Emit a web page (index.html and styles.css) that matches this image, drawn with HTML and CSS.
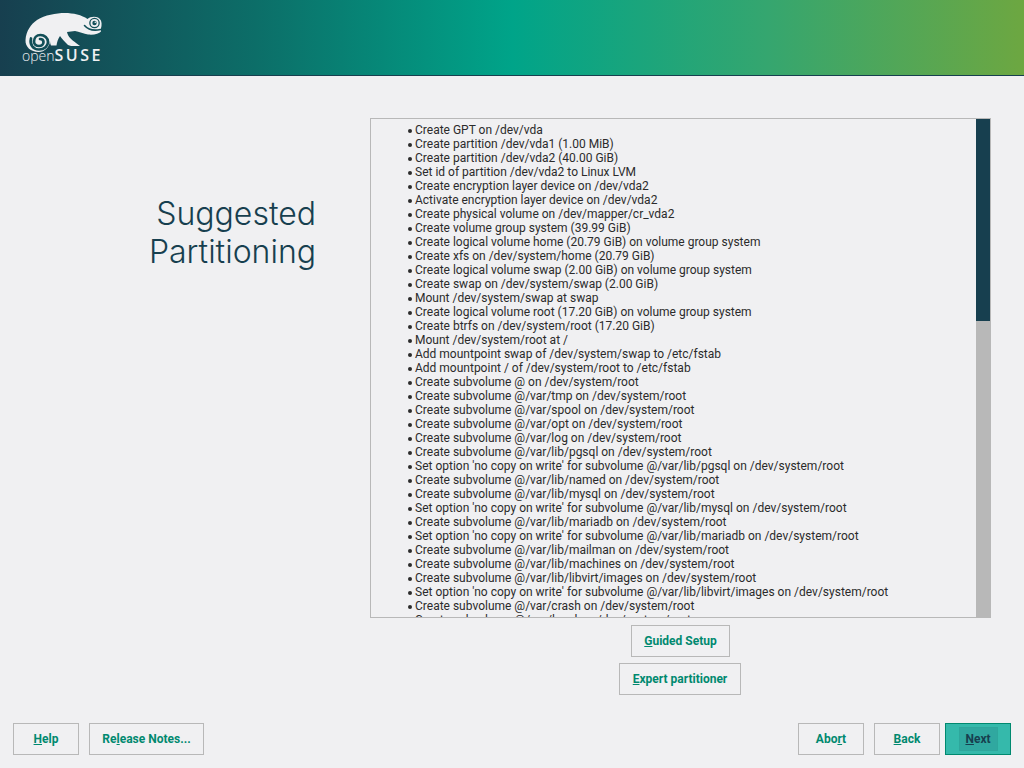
FILE: index.html
```html
<!DOCTYPE html>
<html lang="en">
<head>
    <meta charset="UTF-8">
    <title>Suggested Partitioning</title>
    <link rel="stylesheet" href="styles.css">
</head>
<body>
    <header class="banner">
        <div class="logo">
            <svg class="logo-mark" width="84" height="44" viewBox="22 10 84 44">
                <path fill="#f0f0f2" d="M25.500 40C26 31 31 24 37 20 45 15 56 13 65 13 73 13 82 15 87.500 19 90 16.500 95 16 98 17.500 101 19 102 22 101.500 26 101 28 100.500 29.500 101 31.500 99 34 94 35 88 34.500 84 34 79 31.500 75 31L67 32C68 37 72 40 76 43L80 46C76 46 71 46.500 68 45 65 42 62 39 60 36 58 39 57 42 56.500 45.500L51 45.500C50.500 44 50 43 50 41 49.500 47 45 52 38.500 52 31 52 25 47 25.500 40Z"/>
                <path fill="none" stroke="#124f58" stroke-width="2.700" stroke-linecap="round" d="M31 38.500C29.500 44.500 33 49.500 39 49.500 44.500 49.500 48 46 48 42 48 38 44.500 35 40.500 35 36.500 35 34 38 34 41.500 34 44.500 36.500 46 39 46 41.500 46 43.500 44.500 43.500 42 43.500 40 42 39 40 39"/>
                <path fill="none" stroke="#124f58" stroke-width="1.600" stroke-linecap="round" d="M84.500 25.500C88 29.500 94 31 100.500 29.500"/>
                <circle cx="94.500" cy="23" r="5.300" fill="#124f58"/>
                <circle cx="94.500" cy="23" r="4" fill="#f0f0f2"/>
                <circle cx="94.500" cy="23" r="2.200" fill="#124f58"/>
                <circle cx="95.300" cy="22.300" r="0.800" fill="#f0f0f2"/>
            </svg>
            <div class="logo-text"><span class="logo-open">open</span><span class="logo-suse">SUSE</span></div>
        </div>
    </header>

    <main class="content">
        <div class="title-col">
            <h1>Suggested<br>Partitioning</h1>
        </div>
        <div class="main-col">
            <div class="listbox">
                <ul class="actions">
                    <li>Create GPT on /dev/vda</li>
                    <li>Create partition /dev/vda1 (1.00 MiB)</li>
                    <li>Create partition /dev/vda2 (40.00 GiB)</li>
                    <li>Set id of partition /dev/vda2 to Linux LVM</li>
                    <li>Create encryption layer device on /dev/vda2</li>
                    <li>Activate encryption layer device on /dev/vda2</li>
                    <li>Create physical volume on /dev/mapper/cr_vda2</li>
                    <li>Create volume group system (39.99 GiB)</li>
                    <li>Create logical volume home (20.79 GiB) on volume group system</li>
                    <li>Create xfs on /dev/system/home (20.79 GiB)</li>
                    <li>Create logical volume swap (2.00 GiB) on volume group system</li>
                    <li>Create swap on /dev/system/swap (2.00 GiB)</li>
                    <li>Mount /dev/system/swap at swap</li>
                    <li>Create logical volume root (17.20 GiB) on volume group system</li>
                    <li>Create btrfs on /dev/system/root (17.20 GiB)</li>
                    <li>Mount /dev/system/root at /</li>
                    <li>Add mountpoint swap of /dev/system/swap to /etc/fstab</li>
                    <li>Add mountpoint / of /dev/system/root to /etc/fstab</li>
                    <li>Create subvolume @ on /dev/system/root</li>
                    <li>Create subvolume @/var/tmp on /dev/system/root</li>
                    <li>Create subvolume @/var/spool on /dev/system/root</li>
                    <li>Create subvolume @/var/opt on /dev/system/root</li>
                    <li>Create subvolume @/var/log on /dev/system/root</li>
                    <li>Create subvolume @/var/lib/pgsql on /dev/system/root</li>
                    <li>Set option 'no copy on write' for subvolume @/var/lib/pgsql on /dev/system/root</li>
                    <li>Create subvolume @/var/lib/named on /dev/system/root</li>
                    <li>Create subvolume @/var/lib/mysql on /dev/system/root</li>
                    <li>Set option 'no copy on write' for subvolume @/var/lib/mysql on /dev/system/root</li>
                    <li>Create subvolume @/var/lib/mariadb on /dev/system/root</li>
                    <li>Set option 'no copy on write' for subvolume @/var/lib/mariadb on /dev/system/root</li>
                    <li>Create subvolume @/var/lib/mailman on /dev/system/root</li>
                    <li>Create subvolume @/var/lib/machines on /dev/system/root</li>
                    <li>Create subvolume @/var/lib/libvirt/images on /dev/system/root</li>
                    <li>Set option 'no copy on write' for subvolume @/var/lib/libvirt/images on /dev/system/root</li>
                    <li>Create subvolume @/var/crash on /dev/system/root</li>
                    <li>Create subvolume @/usr/local on /dev/system/root</li>
                </ul>
                <div class="scrollbar"><div class="scroll-thumb"></div></div>
            </div>
            <div class="partition-buttons">
                <button class="btn btn-guided"><u>G</u>uided Setup</button>
                <button class="btn btn-expert"><u>E</u>xpert partitioner</button>
            </div>
        </div>
    </main>

    <footer class="bottom-bar">
        <button class="btn btn-help"><u>H</u>elp</button>
        <button class="btn btn-notes">Re<u>l</u>ease Notes...</button>
        <div class="spacer"></div>
        <button class="btn btn-abort">Abo<u>r</u>t</button>
        <button class="btn btn-back"><u>B</u>ack</button>
        <button class="btn btn-next"><span class="focus-box"><u>N</u>ext</span></button>
    </footer>
</body>
</html>
```

FILE: styles.css
```css
html, body {
    margin: 0;
    padding: 0;
    height: 768px;
    overflow: hidden;
}
body {
    background: #f0f0f2;
    font-family: Roboto, 'Liberation Sans', sans-serif;
    display: flex;
    flex-direction: column;
}
.banner {
    height: 75px;
    border-bottom: 1px solid #173f4f;
    background: linear-gradient(90deg, #173f4f 0%, #0c6e68 25%, #00a489 50%, #35a66f 75%, #6da741 100%);
    padding-left: 22px;
    flex: none;
}
.logo {
    width: 84px;
    padding-top: 10px;
    position: relative;
}
.logo-mark {
    display: block;
}
.logo-text {
    position: absolute;
    left: 0;
    top: 46px;
    color: #f0f0f2;
    white-space: nowrap;
    line-height: 18px;
}
.logo-open {
    font-family: 'Open Sans', sans-serif;
    font-size: 14px;
    font-weight: 300;
}
.logo-suse {
    font-family: 'Open Sans', sans-serif;
    font-size: 16px;
    font-weight: 600;
    letter-spacing: 2.5px;
}
.content {
    flex: 1;
    display: flex;
    min-height: 0;
}
.title-col {
    width: 316px;
    flex: none;
    padding-top: 119px;
}
h1 {
    margin: 0;
    font-family: Inter, sans-serif;
    font-weight: 300;
    font-size: 32px;
    line-height: 38px;
    color: #173f4f;
    text-align: right;
}
.main-col {
    margin-left: 54px;
    width: 621px;
    padding-top: 42px;
}
.listbox {
    height: 498px;
    border: 1px solid #b8b8b8;
    display: flex;
    overflow: hidden;
}
.actions {
    flex: 1;
    margin: 0;
    padding: 4px 0 0 44px;
    list-style: none;
    font-size: 12px;
    line-height: 14px;
    color: #2b2b2b;
    overflow: hidden;
}
.actions li {
    white-space: nowrap;
    position: relative;
}
.actions li::before {
    content: "";
    position: absolute;
    left: -7px;
    top: 6px;
    width: 4px;
    height: 4px;
    border-radius: 50%;
    background: #2b2b2b;
}
.scrollbar {
    width: 14px;
    flex: none;
    background: #b8b8b8;
}
.scroll-thumb {
    height: 202px;
    background: #173f4f;
}
.partition-buttons {
    display: flex;
    flex-direction: column;
    align-items: center;
    gap: 6px;
    padding-top: 7px;
    padding-right: 1px;
}
.btn {
    height: 32px;
    box-sizing: border-box;
    border: 1px solid #b8b8b8;
    background: #f0f0f2;
    color: #00896f;
    font-family: Roboto, 'Liberation Sans', sans-serif;
    font-size: 12px;
    font-weight: 700;
    padding: 0;
}
.btn-guided { width: 99px; margin-left: 1px; }
.btn-expert { width: 122px; }
.bottom-bar {
    flex: none;
    display: flex;
    padding: 0 13px 13px 13px;
}
.spacer { flex: 1; }
.btn-help { width: 66px; margin-right: 10px; }
.btn-notes { width: 115px; }
.btn-abort { width: 66px; margin-right: 10px; }
.btn-back { width: 66px; margin-right: 5px; }
.btn-next {
    width: 66px;
    background: #35b9ab;
    border-color: #00896f;
    color: #173f4f;
}
.focus-box {
    display: inline-block;
    width: 39px;
    height: 24px;
    line-height: 22px;
    box-sizing: border-box;
    border: 1px solid #2ea79c;
    background: #30a8a0;
}
```
